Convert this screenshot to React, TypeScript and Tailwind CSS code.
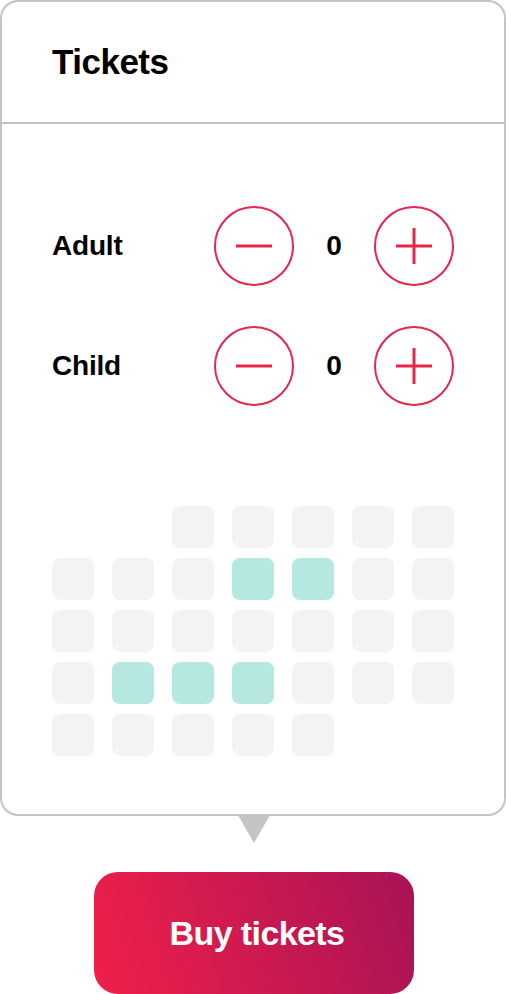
import React from "react";

const font = { fontFamily: '"Liberation Sans", Arial, sans-serif' };

// seat map: 0 = none, 1 = free, 2 = selected
const seats = [
  [0, 0, 1, 1, 1, 1, 1],
  [1, 1, 1, 2, 2, 1, 1],
  [1, 1, 1, 1, 1, 1, 1],
  [1, 2, 2, 2, 1, 1, 1],
  [1, 1, 1, 1, 1, 0, 0],
];

function CircleButton({ plus }: { plus?: boolean }) {
  return (
    <button className="w-[80px] h-[80px] rounded-full border-2 border-[#e8254b] flex items-center justify-center">
      <svg width="38" height="38" viewBox="0 0 38 38" fill="none" stroke="#e8254b" strokeWidth="3">
        <line x1="1" y1="19" x2="37" y2="19" />
        {plus && <line x1="19" y1="1" x2="19" y2="37" />}
      </svg>
    </button>
  );
}

function Counter({ label }: { label: string }) {
  return (
    <div className="flex items-center justify-between">
      <span className="text-[28px] font-bold text-black tracking-[-0.2px]">{label}</span>
      <div className="flex items-center">
        <CircleButton />
        <span className="w-[80px] text-center text-[28px] font-bold text-black">0</span>
        <CircleButton plus />
      </div>
    </div>
  );
}

export default function App() {
  return (
    <div className="w-[506px] h-[994px] bg-white flex flex-col items-center overflow-hidden" style={font}>
      <div className="w-[506px] border-2 border-[#c4c4c4] rounded-[18px] bg-white">
        <div className="h-[122px] border-b-2 border-[#c4c4c4] flex items-center pl-[50px]">
          <h1 className="text-[35px] font-bold text-black tracking-[-0.5px]">Tickets</h1>
        </div>
        <div className="px-[50px] pt-[82px] pb-[58px]">
          <div className="flex flex-col gap-[40px]">
            <Counter label="Adult" />
            <Counter label="Child" />
          </div>
          <div className="mt-[100px] grid grid-cols-7 gap-x-[18px] gap-y-[10px]">
            {seats.flatMap((row, r) =>
              row.map((s, c) => (
                <div
                  key={`${r}-${c}`}
                  className={
                    s === 0
                      ? "h-[42px]"
                      : s === 2
                      ? "h-[42px] rounded-[8px] bg-[#b4e8e0]"
                      : "h-[42px] rounded-[8px] bg-[#f3f3f3]"
                  }
                />
              ))
            )}
          </div>
        </div>
      </div>
      <div className="-mt-[1px] ml-[2px] w-0 h-0 border-l-[16.5px] border-r-[16.5px] border-t-[28px] border-l-transparent border-r-transparent border-t-[#c4c4c4]" />
      <button className="mt-[29px] ml-[2px] pl-[6px] w-[320px] h-[122px] rounded-[24px] bg-linear-[72deg] from-[#f0204a] to-[#a81356] text-white text-[34px] font-bold tracking-[-0.6px]">
        Buy tickets
      </button>
    </div>
  );
}
